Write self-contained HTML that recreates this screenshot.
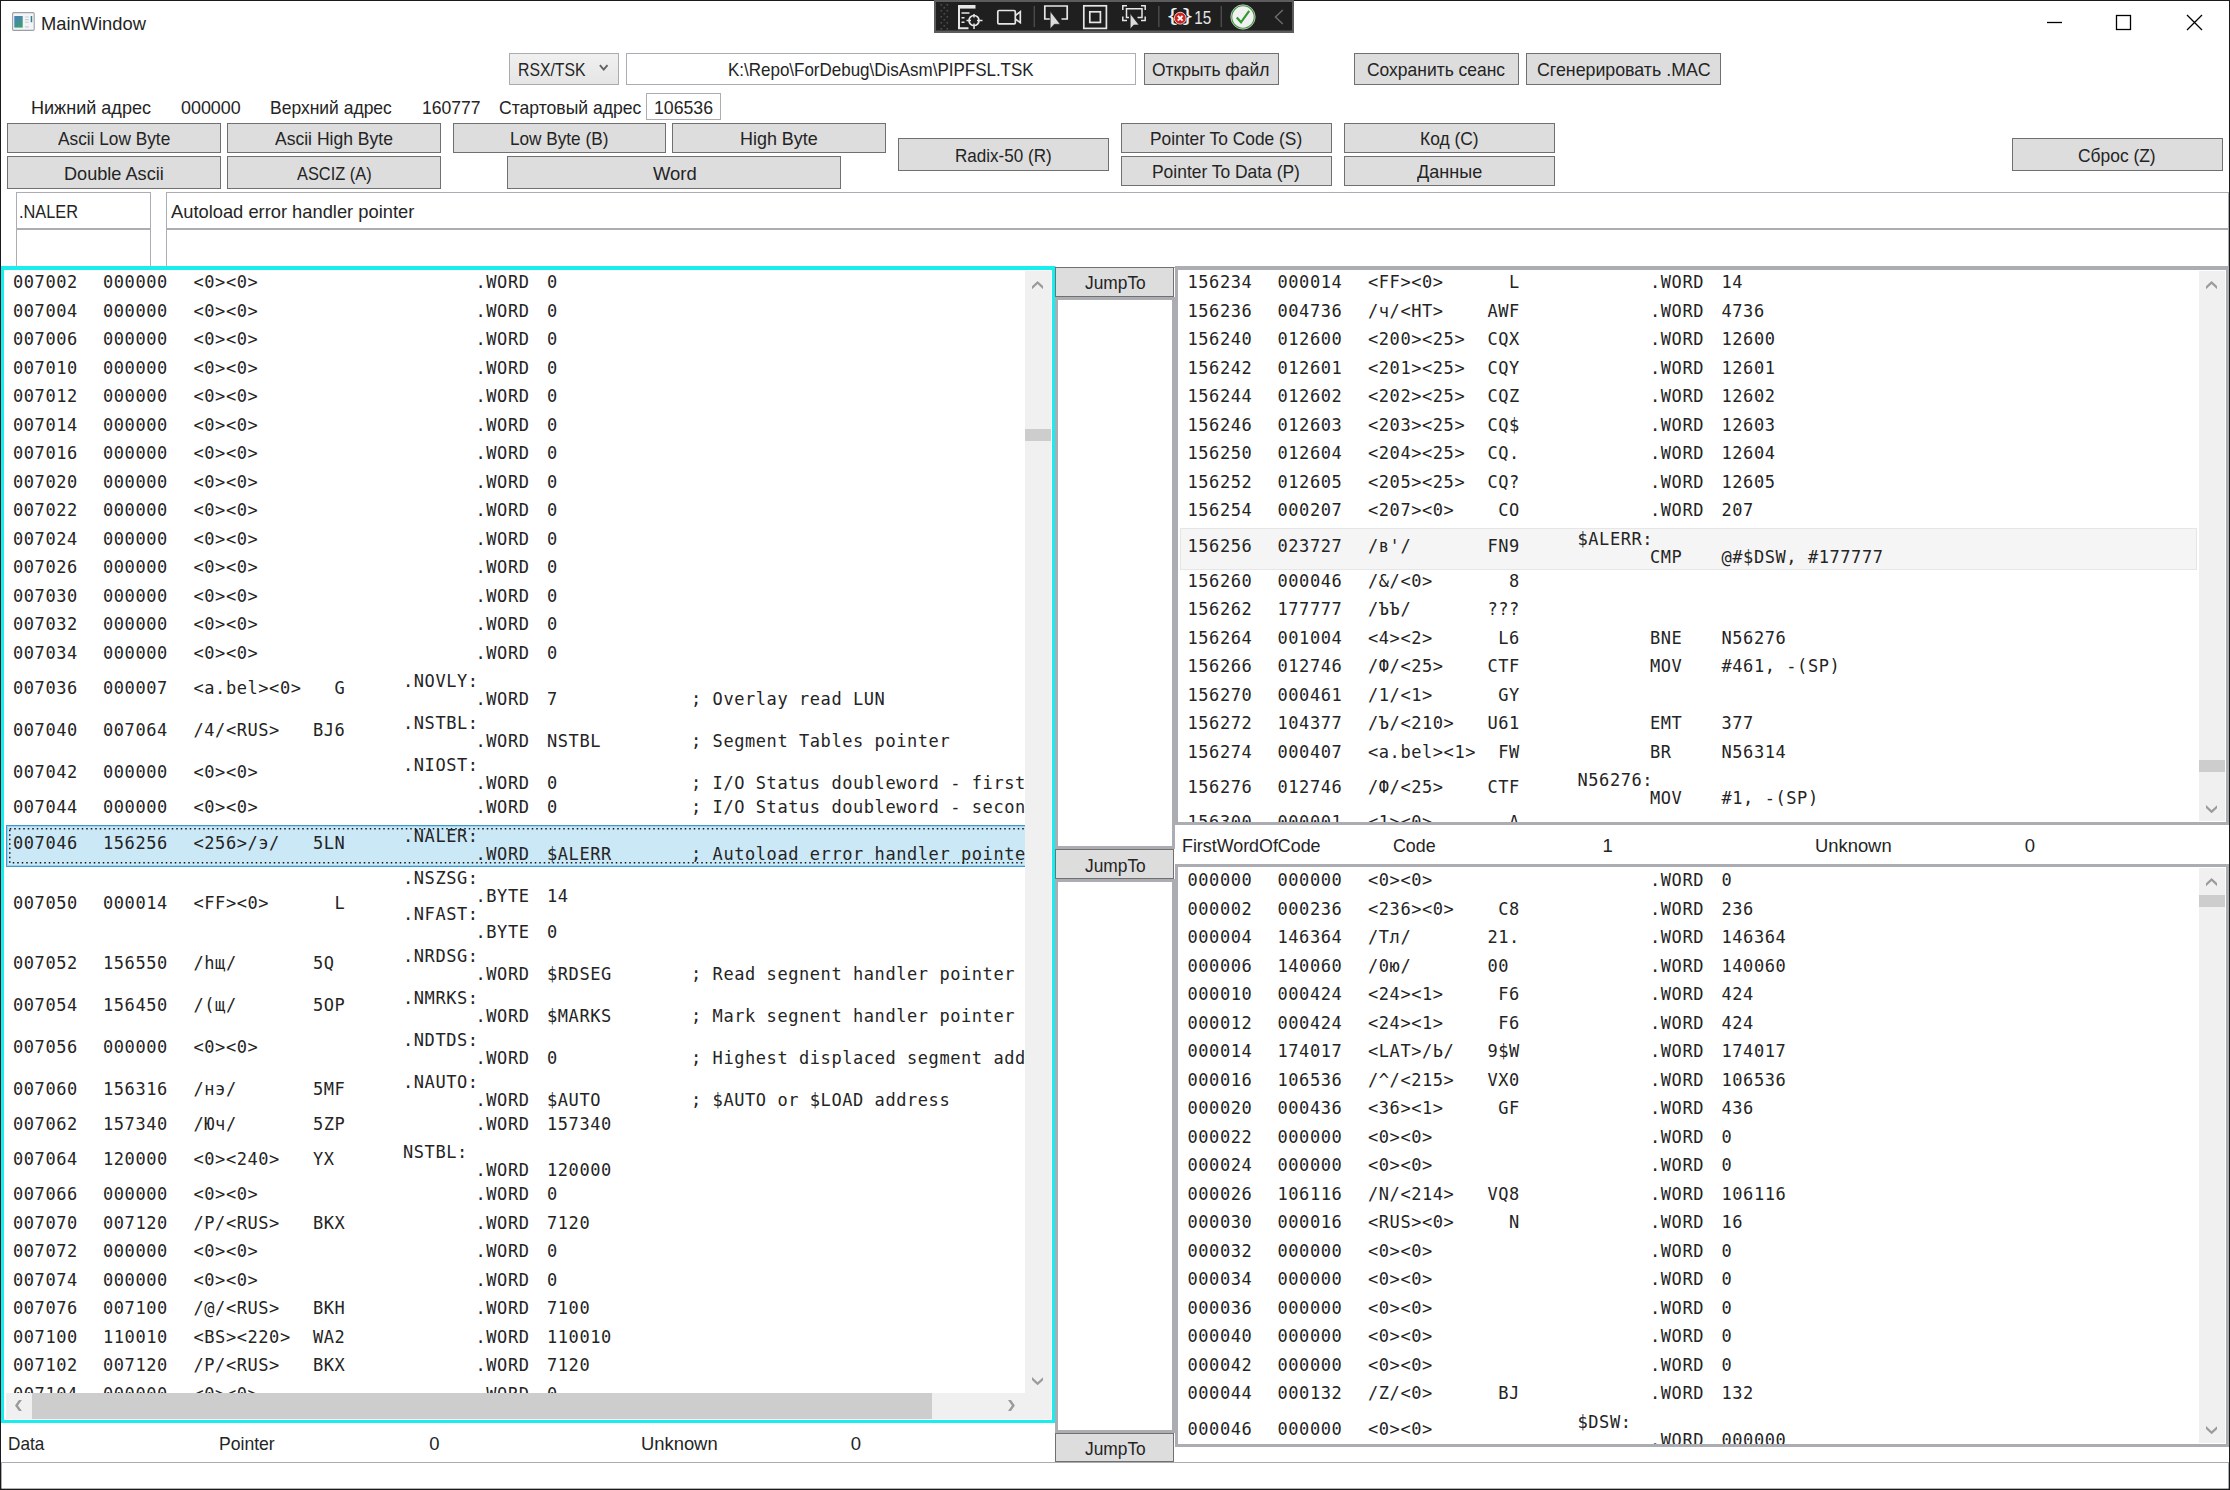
<!DOCTYPE html>
<html lang="ru"><head><meta charset="utf-8"><title>MainWindow</title><style>
html,body{margin:0;padding:0}
body{width:2230px;height:1490px;overflow:hidden;background:#fff;position:relative;font-family:'Liberation Sans',sans-serif;font-size:18.5px;color:#242424}
.a{position:absolute;box-sizing:content-box}
.t{position:absolute;white-space:pre;line-height:24px;transform-origin:0 0}
.l{position:absolute;overflow:hidden;background:#fff;font-family:'DejaVu Sans Mono','Liberation Mono',monospace;font-size:17.0px;line-height:18px;letter-spacing:0.565px}
.l div{position:absolute;left:0;white-space:pre}
.l span{position:absolute;white-space:pre}
</style></head><body>
<svg class="a" style="left:12px;top:12px" width="23" height="19" viewBox="0 0 23 19"><linearGradient id="ig" x1="0" y1="0" x2="0.6" y2="1"><stop offset="0" stop-color="#4b7fbe"/><stop offset="1" stop-color="#3e9c78"/></linearGradient><rect x="0.6" y="0.6" width="21.6" height="17.8" rx="1.2" fill="#f3f4f6" stroke="#9aa0a8" stroke-width="1.1"/><rect x="2.3" y="4" width="8.4" height="11.6" fill="url(#ig)"/><path d="M13 5H16.8M13 7.6H16.8M13 10.3H16.8M13 14.9H16.8" stroke="#c9cdd3" stroke-width="1.1"/><rect x="18.7" y="4" width="1.5" height="6.2" fill="#2f7f8f"/></svg>
<svg class="a" style="left:2040px;top:8px" width="170" height="30" viewBox="0 0 170 30" fill="none" stroke="#000" stroke-width="1.3"><path d="M7 14.5H22"/><rect x="76.5" y="7.5" width="14" height="14"/><path d="M147 7L162 22M162 7L147 22"/></svg>
<svg class="a" style="left:934px;top:0;z-index:5" width="360" height="33" viewBox="0 0 360 33"><rect x="0" y="0" width="360" height="33" fill="#5c5c5c"/><rect x="2" y="2" width="356" height="28.5" fill="#1f1f1f"/><g fill="#4d4d4d"><rect x="6.5" y="4" width="1.6" height="1.6"/><rect x="12.5" y="4" width="1.6" height="1.6"/><rect x="9.5" y="7" width="1.6" height="1.6"/><rect x="6.5" y="10" width="1.6" height="1.6"/><rect x="12.5" y="10" width="1.6" height="1.6"/><rect x="9.5" y="13" width="1.6" height="1.6"/><rect x="6.5" y="16" width="1.6" height="1.6"/><rect x="12.5" y="16" width="1.6" height="1.6"/><rect x="9.5" y="19" width="1.6" height="1.6"/><rect x="6.5" y="22" width="1.6" height="1.6"/><rect x="12.5" y="22" width="1.6" height="1.6"/><rect x="9.5" y="25" width="1.6" height="1.6"/><rect x="6.5" y="28" width="1.6" height="1.6"/><rect x="12.5" y="28" width="1.6" height="1.6"/></g><g fill="none" stroke="#e6e6e6" stroke-width="1.7"><path d="M25 5V28.2H34.5M25 7H41" stroke-width="2"/><path d="M24 6.8H41.5" stroke-width="3.6"/><path d="M27.5 13H35.5M27.5 17.7H30.5M27.5 22.3H30.5" stroke-width="1.5"/><circle cx="40" cy="20.5" r="5"/><path d="M40 14V17.5M40 23.5V29M32.5 20.5H37M43 20.5H48.5" stroke-width="1.5"/><rect x="63.8" y="10.5" width="17.5" height="13.4" rx="1.2"/><path d="M81.3 15.5L86.3 11.8V22.6L81.3 19"/><path d="M116 19H110.8V6H133.2V19H127.5"/><rect x="149.8" y="5.8" width="22.6" height="22.6"/><rect x="155.8" y="11.8" width="10.6" height="10.6"/><path d="M188.8 10V5.8H193M207 5.8H211.2V10M211.2 16.5V20.5H207M193 20.5H188.8V16.5" stroke-width="1.5"/><path d="M195 17.5H192.5V8.8H208V17.5H203.5" stroke-width="1.5"/></g><path d="M116.2 11.3V28.8L120.3 24.3L126.2 24.2Z" fill="#dcdcdc" stroke="#1f1f1f" stroke-width=".6"/><path d="M196.2 13.6V28.9L199.8 25L205 24.9Z" fill="#dcdcdc" stroke="#1f1f1f" stroke-width=".6"/><g stroke="#4a4a4a" stroke-width="1.5"><path d="M100.3 6V27M224.8 6V27M287.3 6V27"/></g><text x="234" y="21.3" font-family="'Liberation Sans',sans-serif" font-size="19" fill="#f0f0f0" textLength="9" lengthAdjust="spacingAndGlyphs">{</text><text x="249" y="21.3" font-family="'Liberation Sans',sans-serif" font-size="19" fill="#f0f0f0" textLength="9" lengthAdjust="spacingAndGlyphs">}</text><circle cx="246.2" cy="18.2" r="5.9" fill="#d6201f" stroke="#f4f4f4" stroke-width=".8"/><path d="M243.8 15.8L248.6 20.6M248.6 15.8L243.8 20.6" stroke="#fff" stroke-width="1.9"/><text x="260.3" y="23.6" font-family="'Liberation Sans',sans-serif" font-size="18.5" fill="#e4e4e4" textLength="17" lengthAdjust="spacingAndGlyphs">15</text><circle cx="309" cy="17" r="11.3" fill="#f1f1f1" stroke="#3c9b3c" stroke-width="1.2"/><circle cx="309" cy="17" r="12.2" fill="none" stroke="#e9f3e9" stroke-width=".7"/><path d="M302.8 17.5L307 22.3L315.2 10.8" fill="none" stroke="#2f9a2f" stroke-width="2.2"/><path d="M348.8 10L341.5 17L348.8 24" fill="none" stroke="#6b6b6b" stroke-width="1.5"/></svg>
<div class="a" style="left:509px;top:53px;width:108px;height:30px;background:linear-gradient(#f0f0f0,#e5e5e5);border:1px solid #acacac;"></div>
<svg class="a" style="left:599.3px;top:64px" width="10" height="8" viewBox="0 0 10 8" fill="none" stroke="#606060" stroke-width="1.9"><path d="M0.9 1.2L4.7 5.6L8.5 1.2"/></svg>
<div class="a" style="left:626px;top:53px;width:508px;height:30px;background:#fff;border:1px solid #abadb3;"></div>
<div class="a" style="left:1144px;top:53px;width:133px;height:30px;background:#ddd;border:1px solid #707070;"></div>
<div class="a" style="left:1354px;top:53px;width:163px;height:30px;background:#ddd;border:1px solid #707070;"></div>
<div class="a" style="left:1526px;top:53px;width:193px;height:30px;background:#ddd;border:1px solid #707070;"></div>
<div class="a" style="left:646px;top:93px;width:73px;height:25px;background:#fff;border:1px solid #abadb3;"></div>
<div class="a" style="left:7px;top:123px;width:212px;height:28px;background:#ddd;border:1px solid #707070;"></div>
<div class="a" style="left:227px;top:123px;width:212px;height:28px;background:#ddd;border:1px solid #707070;"></div>
<div class="a" style="left:7px;top:156px;width:212px;height:31px;background:#ddd;border:1px solid #707070;"></div>
<div class="a" style="left:227px;top:156px;width:212px;height:31px;background:#ddd;border:1px solid #707070;"></div>
<div class="a" style="left:453px;top:123px;width:211px;height:28px;background:#ddd;border:1px solid #707070;"></div>
<div class="a" style="left:672px;top:123px;width:212px;height:28px;background:#ddd;border:1px solid #707070;"></div>
<div class="a" style="left:507px;top:156px;width:332px;height:31px;background:#ddd;border:1px solid #707070;"></div>
<div class="a" style="left:898px;top:138px;width:209px;height:31px;background:#ddd;border:1px solid #707070;"></div>
<div class="a" style="left:1121px;top:123px;width:209px;height:28px;background:#ddd;border:1px solid #707070;"></div>
<div class="a" style="left:1121px;top:156px;width:209px;height:28px;background:#ddd;border:1px solid #707070;"></div>
<div class="a" style="left:1344px;top:123px;width:209px;height:28px;background:#ddd;border:1px solid #707070;"></div>
<div class="a" style="left:1344px;top:156px;width:209px;height:28px;background:#ddd;border:1px solid #707070;"></div>
<div class="a" style="left:2012px;top:138px;width:209px;height:31px;background:#ddd;border:1px solid #707070;"></div>
<div class="a" style="left:16px;top:192px;width:133px;height:35px;background:#fff;border:1px solid #abadb3;"></div>
<div class="a" style="left:16px;top:229px;width:133px;height:37px;background:#fff;border:1px solid #abadb3;"></div>
<div class="a" style="left:166px;top:192px;width:2061px;height:35px;background:#fff;border:1px solid #abadb3;"></div>
<div class="a" style="left:166px;top:229px;width:2061px;height:37px;background:#fff;border:1px solid #abadb3;"></div>
<div class="a" style="left:0;top:266px;width:1048px;height:1150px;background:#fff;border:solid #19eded;border-width:4px 3px 3px 4px;box-shadow:1px 0 0 0 rgba(30,236,236,.5)"></div>
<div class="l" style="left:4px;top:270px;width:1021px;height:1123px">
<span style="left:9.0px;top:3.00px">007002</span>
<span style="left:99.0px;top:3.00px">000000</span>
<span style="left:189.5px;top:3.00px">&lt;0&gt;&lt;0&gt;</span>
<span style="left:471.5px;top:3.00px">.WORD</span>
<span style="left:543.0px;top:3.00px">0</span>
<span style="left:9.0px;top:31.50px">007004</span>
<span style="left:99.0px;top:31.50px">000000</span>
<span style="left:189.5px;top:31.50px">&lt;0&gt;&lt;0&gt;</span>
<span style="left:471.5px;top:31.50px">.WORD</span>
<span style="left:543.0px;top:31.50px">0</span>
<span style="left:9.0px;top:60.00px">007006</span>
<span style="left:99.0px;top:60.00px">000000</span>
<span style="left:189.5px;top:60.00px">&lt;0&gt;&lt;0&gt;</span>
<span style="left:471.5px;top:60.00px">.WORD</span>
<span style="left:543.0px;top:60.00px">0</span>
<span style="left:9.0px;top:88.50px">007010</span>
<span style="left:99.0px;top:88.50px">000000</span>
<span style="left:189.5px;top:88.50px">&lt;0&gt;&lt;0&gt;</span>
<span style="left:471.5px;top:88.50px">.WORD</span>
<span style="left:543.0px;top:88.50px">0</span>
<span style="left:9.0px;top:117.00px">007012</span>
<span style="left:99.0px;top:117.00px">000000</span>
<span style="left:189.5px;top:117.00px">&lt;0&gt;&lt;0&gt;</span>
<span style="left:471.5px;top:117.00px">.WORD</span>
<span style="left:543.0px;top:117.00px">0</span>
<span style="left:9.0px;top:145.50px">007014</span>
<span style="left:99.0px;top:145.50px">000000</span>
<span style="left:189.5px;top:145.50px">&lt;0&gt;&lt;0&gt;</span>
<span style="left:471.5px;top:145.50px">.WORD</span>
<span style="left:543.0px;top:145.50px">0</span>
<span style="left:9.0px;top:174.00px">007016</span>
<span style="left:99.0px;top:174.00px">000000</span>
<span style="left:189.5px;top:174.00px">&lt;0&gt;&lt;0&gt;</span>
<span style="left:471.5px;top:174.00px">.WORD</span>
<span style="left:543.0px;top:174.00px">0</span>
<span style="left:9.0px;top:202.50px">007020</span>
<span style="left:99.0px;top:202.50px">000000</span>
<span style="left:189.5px;top:202.50px">&lt;0&gt;&lt;0&gt;</span>
<span style="left:471.5px;top:202.50px">.WORD</span>
<span style="left:543.0px;top:202.50px">0</span>
<span style="left:9.0px;top:231.00px">007022</span>
<span style="left:99.0px;top:231.00px">000000</span>
<span style="left:189.5px;top:231.00px">&lt;0&gt;&lt;0&gt;</span>
<span style="left:471.5px;top:231.00px">.WORD</span>
<span style="left:543.0px;top:231.00px">0</span>
<span style="left:9.0px;top:259.50px">007024</span>
<span style="left:99.0px;top:259.50px">000000</span>
<span style="left:189.5px;top:259.50px">&lt;0&gt;&lt;0&gt;</span>
<span style="left:471.5px;top:259.50px">.WORD</span>
<span style="left:543.0px;top:259.50px">0</span>
<span style="left:9.0px;top:288.00px">007026</span>
<span style="left:99.0px;top:288.00px">000000</span>
<span style="left:189.5px;top:288.00px">&lt;0&gt;&lt;0&gt;</span>
<span style="left:471.5px;top:288.00px">.WORD</span>
<span style="left:543.0px;top:288.00px">0</span>
<span style="left:9.0px;top:316.50px">007030</span>
<span style="left:99.0px;top:316.50px">000000</span>
<span style="left:189.5px;top:316.50px">&lt;0&gt;&lt;0&gt;</span>
<span style="left:471.5px;top:316.50px">.WORD</span>
<span style="left:543.0px;top:316.50px">0</span>
<span style="left:9.0px;top:345.00px">007032</span>
<span style="left:99.0px;top:345.00px">000000</span>
<span style="left:189.5px;top:345.00px">&lt;0&gt;&lt;0&gt;</span>
<span style="left:471.5px;top:345.00px">.WORD</span>
<span style="left:543.0px;top:345.00px">0</span>
<span style="left:9.0px;top:373.50px">007034</span>
<span style="left:99.0px;top:373.50px">000000</span>
<span style="left:189.5px;top:373.50px">&lt;0&gt;&lt;0&gt;</span>
<span style="left:471.5px;top:373.50px">.WORD</span>
<span style="left:543.0px;top:373.50px">0</span>
<span style="left:9.0px;top:409.20px">007036</span>
<span style="left:99.0px;top:409.20px">000007</span>
<span style="left:189.5px;top:409.20px">&lt;a.bel&gt;&lt;0&gt;</span>
<span style="left:309.0px;top:409.20px">  G</span>
<span style="left:399.0px;top:402.10px">.NOVLY:</span>
<span style="left:471.5px;top:420.10px">.WORD</span>
<span style="left:543.0px;top:420.10px">7</span>
<span style="left:687.0px;top:420.10px">; Overlay read LUN</span>
<span style="left:9.0px;top:451.20px">007040</span>
<span style="left:99.0px;top:451.20px">007064</span>
<span style="left:189.5px;top:451.20px">/4/&lt;RUS&gt;</span>
<span style="left:309.0px;top:451.20px">BJ6</span>
<span style="left:399.0px;top:444.10px">.NSTBL:</span>
<span style="left:471.5px;top:462.10px">.WORD</span>
<span style="left:543.0px;top:462.10px">NSTBL</span>
<span style="left:687.0px;top:462.10px">; Segment Tables pointer</span>
<span style="left:9.0px;top:493.20px">007042</span>
<span style="left:99.0px;top:493.20px">000000</span>
<span style="left:189.5px;top:493.20px">&lt;0&gt;&lt;0&gt;</span>
<span style="left:399.0px;top:486.10px">.NIOST:</span>
<span style="left:471.5px;top:504.10px">.WORD</span>
<span style="left:543.0px;top:504.10px">0</span>
<span style="left:687.0px;top:504.10px">; I/O Status doubleword - first word</span>
<span style="left:9.0px;top:528.00px">007044</span>
<span style="left:99.0px;top:528.00px">000000</span>
<span style="left:189.5px;top:528.00px">&lt;0&gt;&lt;0&gt;</span>
<span style="left:471.5px;top:528.00px">.WORD</span>
<span style="left:543.0px;top:528.00px">0</span>
<span style="left:687.0px;top:528.00px">; I/O Status doubleword - second word</span>
<div style="left:2px;top:555.0px;width:1061px;height:40px;background:#cbe8f6;border:1px solid #3a9cd3;box-shadow:inset 0 0 0 1px rgba(58,156,211,.3)"></div>
<svg style="position:absolute;left:5px;top:558.4px" width="1061" height="35.5"><rect x="0.75" y="0.75" width="1081" height="34" fill="none" stroke="#111" stroke-width="1.5" stroke-dasharray="1.5 3"/></svg>
<span style="left:9.0px;top:563.70px">007046</span>
<span style="left:99.0px;top:563.70px">156256</span>
<span style="left:189.5px;top:563.70px">&lt;256&gt;/э/</span>
<span style="left:309.0px;top:563.70px">5LN</span>
<span style="left:399.0px;top:556.60px">.NALER:</span>
<span style="left:471.5px;top:574.60px">.WORD</span>
<span style="left:543.0px;top:574.60px">$ALERR</span>
<span style="left:687.0px;top:574.60px">; Autoload error handler pointer</span>
<span style="left:9.0px;top:623.70px">007050</span>
<span style="left:99.0px;top:623.70px">000014</span>
<span style="left:189.5px;top:623.70px">&lt;FF&gt;&lt;0&gt;</span>
<span style="left:309.0px;top:623.70px">  L</span>
<span style="left:399.0px;top:598.60px">.NSZSG:</span>
<span style="left:471.5px;top:616.60px">.BYTE</span>
<span style="left:543.0px;top:616.60px">14</span>
<span style="left:399.0px;top:634.60px">.NFAST:</span>
<span style="left:471.5px;top:652.60px">.BYTE</span>
<span style="left:543.0px;top:652.60px">0</span>
<span style="left:9.0px;top:683.70px">007052</span>
<span style="left:99.0px;top:683.70px">156550</span>
<span style="left:189.5px;top:683.70px">/hщ/</span>
<span style="left:309.0px;top:683.70px">5Q </span>
<span style="left:399.0px;top:676.60px">.NRDSG:</span>
<span style="left:471.5px;top:694.60px">.WORD</span>
<span style="left:543.0px;top:694.60px">$RDSEG</span>
<span style="left:687.0px;top:694.60px">; Read segnent handler pointer</span>
<span style="left:9.0px;top:725.70px">007054</span>
<span style="left:99.0px;top:725.70px">156450</span>
<span style="left:189.5px;top:725.70px">/(щ/</span>
<span style="left:309.0px;top:725.70px">5OP</span>
<span style="left:399.0px;top:718.60px">.NMRKS:</span>
<span style="left:471.5px;top:736.60px">.WORD</span>
<span style="left:543.0px;top:736.60px">$MARKS</span>
<span style="left:687.0px;top:736.60px">; Mark segnent handler pointer</span>
<span style="left:9.0px;top:767.70px">007056</span>
<span style="left:99.0px;top:767.70px">000000</span>
<span style="left:189.5px;top:767.70px">&lt;0&gt;&lt;0&gt;</span>
<span style="left:399.0px;top:760.60px">.NDTDS:</span>
<span style="left:471.5px;top:778.60px">.WORD</span>
<span style="left:543.0px;top:778.60px">0</span>
<span style="left:687.0px;top:778.60px">; Highest displaced segment address</span>
<span style="left:9.0px;top:809.70px">007060</span>
<span style="left:99.0px;top:809.70px">156316</span>
<span style="left:189.5px;top:809.70px">/нэ/</span>
<span style="left:309.0px;top:809.70px">5MF</span>
<span style="left:399.0px;top:802.60px">.NAUTO:</span>
<span style="left:471.5px;top:820.60px">.WORD</span>
<span style="left:543.0px;top:820.60px">$AUTO</span>
<span style="left:687.0px;top:820.60px">; $AUTO or $LOAD address</span>
<span style="left:9.0px;top:844.50px">007062</span>
<span style="left:99.0px;top:844.50px">157340</span>
<span style="left:189.5px;top:844.50px">/Юч/</span>
<span style="left:309.0px;top:844.50px">5ZP</span>
<span style="left:471.5px;top:844.50px">.WORD</span>
<span style="left:543.0px;top:844.50px">157340</span>
<span style="left:9.0px;top:880.20px">007064</span>
<span style="left:99.0px;top:880.20px">120000</span>
<span style="left:189.5px;top:880.20px">&lt;0&gt;&lt;240&gt;</span>
<span style="left:309.0px;top:880.20px">YX </span>
<span style="left:399.0px;top:873.10px">NSTBL:</span>
<span style="left:471.5px;top:891.10px">.WORD</span>
<span style="left:543.0px;top:891.10px">120000</span>
<span style="left:9.0px;top:915.00px">007066</span>
<span style="left:99.0px;top:915.00px">000000</span>
<span style="left:189.5px;top:915.00px">&lt;0&gt;&lt;0&gt;</span>
<span style="left:471.5px;top:915.00px">.WORD</span>
<span style="left:543.0px;top:915.00px">0</span>
<span style="left:9.0px;top:943.50px">007070</span>
<span style="left:99.0px;top:943.50px">007120</span>
<span style="left:189.5px;top:943.50px">/P/&lt;RUS&gt;</span>
<span style="left:309.0px;top:943.50px">BKX</span>
<span style="left:471.5px;top:943.50px">.WORD</span>
<span style="left:543.0px;top:943.50px">7120</span>
<span style="left:9.0px;top:972.00px">007072</span>
<span style="left:99.0px;top:972.00px">000000</span>
<span style="left:189.5px;top:972.00px">&lt;0&gt;&lt;0&gt;</span>
<span style="left:471.5px;top:972.00px">.WORD</span>
<span style="left:543.0px;top:972.00px">0</span>
<span style="left:9.0px;top:1000.50px">007074</span>
<span style="left:99.0px;top:1000.50px">000000</span>
<span style="left:189.5px;top:1000.50px">&lt;0&gt;&lt;0&gt;</span>
<span style="left:471.5px;top:1000.50px">.WORD</span>
<span style="left:543.0px;top:1000.50px">0</span>
<span style="left:9.0px;top:1029.00px">007076</span>
<span style="left:99.0px;top:1029.00px">007100</span>
<span style="left:189.5px;top:1029.00px">/@/&lt;RUS&gt;</span>
<span style="left:309.0px;top:1029.00px">BKH</span>
<span style="left:471.5px;top:1029.00px">.WORD</span>
<span style="left:543.0px;top:1029.00px">7100</span>
<span style="left:9.0px;top:1057.50px">007100</span>
<span style="left:99.0px;top:1057.50px">110010</span>
<span style="left:189.5px;top:1057.50px">&lt;BS&gt;&lt;220&gt;</span>
<span style="left:309.0px;top:1057.50px">WA2</span>
<span style="left:471.5px;top:1057.50px">.WORD</span>
<span style="left:543.0px;top:1057.50px">110010</span>
<span style="left:9.0px;top:1086.00px">007102</span>
<span style="left:99.0px;top:1086.00px">007120</span>
<span style="left:189.5px;top:1086.00px">/P/&lt;RUS&gt;</span>
<span style="left:309.0px;top:1086.00px">BKX</span>
<span style="left:471.5px;top:1086.00px">.WORD</span>
<span style="left:543.0px;top:1086.00px">7120</span>
<span style="left:9.0px;top:1114.50px">007104</span>
<span style="left:99.0px;top:1114.50px">000000</span>
<span style="left:189.5px;top:1114.50px">&lt;0&gt;&lt;0&gt;</span>
<span style="left:471.5px;top:1114.50px">.WORD</span>
<span style="left:543.0px;top:1114.50px">0</span>
</div>
<div class="a" style="left:1025px;top:271px;width:26px;height:1148px;background:#f0f0f0;"></div>
<div class="a" style="left:1025px;top:429px;width:26px;height:12px;background:#cdcdcd;"></div>
<svg class="a" style="left:1032px;top:280.8px" width="11.2" height="8.3" viewBox="0 0 11.2 8.3"><polygon points="5.6,0.0 11.2,5.3 11.2,8.3 5.6,3.0 0.0,8.3 0.0,5.3" fill="#9b9b9b"/></svg>
<svg class="a" style="left:1031.9px;top:1376.5px" width="11.2" height="8.3" viewBox="0 0 11.2 8.3"><polygon points="5.6,8.3 11.2,3.0 11.2,0.0 5.6,5.3 0.0,0.0 0.0,3.0" fill="#9b9b9b"/></svg>
<div class="a" style="left:6px;top:1393px;width:1045px;height:26px;background:#f0f0f0;"></div>
<div class="a" style="left:32px;top:1393px;width:900px;height:26px;background:#cdcdcd;"></div>
<svg class="a" style="left:15.1px;top:1400px" width="6.9" height="11" viewBox="0 0 6.9 11"><polygon points="0.0,5.5 3.9,0.0 6.9,0.0 3.0,5.5 6.9,11.0 3.9,11.0" fill="#9b9b9b"/></svg>
<svg class="a" style="left:1008.2px;top:1400.1px" width="6.9" height="11" viewBox="0 0 6.9 11"><polygon points="6.9,5.5 3.0,0.0 0.0,0.0 3.9,5.5 0.0,11.0 3.0,11.0" fill="#9b9b9b"/></svg>
<div class="a" style="left:1px;top:1462px;width:2226px;height:26px;background:#fff;border:1px solid #abadb3;"></div>
<div class="a" style="left:1055px;top:297px;width:114px;height:546px;background:#fff;border:3px solid #abadb3;"></div>
<div class="a" style="left:1055px;top:879px;width:114px;height:548px;background:#fff;border:3px solid #abadb3;"></div>
<div class="a" style="left:1055px;top:267px;width:117px;height:28px;background:#ddd;border:1px solid #707070;"></div>
<div class="a" style="left:1055px;top:849px;width:117px;height:28px;background:#ddd;border:1px solid #707070;"></div>
<div class="a" style="left:1055px;top:1433px;width:117px;height:27px;background:#ddd;border:1px solid #707070;"></div>
<div class="a" style="left:1175px;top:266px;width:1048px;height:552px;background:#fff;border:solid #abadb3;border-width:4px 3px 3px 3px"></div>
<div class="l" style="left:1178px;top:270px;width:1021px;height:552px">
<span style="left:9.5px;top:3.00px">156234</span>
<span style="left:99.5px;top:3.00px">000014</span>
<span style="left:190.0px;top:3.00px">&lt;FF&gt;&lt;0&gt;</span>
<span style="left:309.5px;top:3.00px">  L</span>
<span style="left:472.0px;top:3.00px">.WORD</span>
<span style="left:543.5px;top:3.00px">14</span>
<span style="left:9.5px;top:31.50px">156236</span>
<span style="left:99.5px;top:31.50px">004736</span>
<span style="left:190.0px;top:31.50px">/ч/&lt;HT&gt;</span>
<span style="left:309.5px;top:31.50px">AWF</span>
<span style="left:472.0px;top:31.50px">.WORD</span>
<span style="left:543.5px;top:31.50px">4736</span>
<span style="left:9.5px;top:60.00px">156240</span>
<span style="left:99.5px;top:60.00px">012600</span>
<span style="left:190.0px;top:60.00px">&lt;200&gt;&lt;25&gt;</span>
<span style="left:309.5px;top:60.00px">CQX</span>
<span style="left:472.0px;top:60.00px">.WORD</span>
<span style="left:543.5px;top:60.00px">12600</span>
<span style="left:9.5px;top:88.50px">156242</span>
<span style="left:99.5px;top:88.50px">012601</span>
<span style="left:190.0px;top:88.50px">&lt;201&gt;&lt;25&gt;</span>
<span style="left:309.5px;top:88.50px">CQY</span>
<span style="left:472.0px;top:88.50px">.WORD</span>
<span style="left:543.5px;top:88.50px">12601</span>
<span style="left:9.5px;top:117.00px">156244</span>
<span style="left:99.5px;top:117.00px">012602</span>
<span style="left:190.0px;top:117.00px">&lt;202&gt;&lt;25&gt;</span>
<span style="left:309.5px;top:117.00px">CQZ</span>
<span style="left:472.0px;top:117.00px">.WORD</span>
<span style="left:543.5px;top:117.00px">12602</span>
<span style="left:9.5px;top:145.50px">156246</span>
<span style="left:99.5px;top:145.50px">012603</span>
<span style="left:190.0px;top:145.50px">&lt;203&gt;&lt;25&gt;</span>
<span style="left:309.5px;top:145.50px">CQ$</span>
<span style="left:472.0px;top:145.50px">.WORD</span>
<span style="left:543.5px;top:145.50px">12603</span>
<span style="left:9.5px;top:174.00px">156250</span>
<span style="left:99.5px;top:174.00px">012604</span>
<span style="left:190.0px;top:174.00px">&lt;204&gt;&lt;25&gt;</span>
<span style="left:309.5px;top:174.00px">CQ.</span>
<span style="left:472.0px;top:174.00px">.WORD</span>
<span style="left:543.5px;top:174.00px">12604</span>
<span style="left:9.5px;top:202.50px">156252</span>
<span style="left:99.5px;top:202.50px">012605</span>
<span style="left:190.0px;top:202.50px">&lt;205&gt;&lt;25&gt;</span>
<span style="left:309.5px;top:202.50px">CQ?</span>
<span style="left:472.0px;top:202.50px">.WORD</span>
<span style="left:543.5px;top:202.50px">12605</span>
<span style="left:9.5px;top:231.00px">156254</span>
<span style="left:99.5px;top:231.00px">000207</span>
<span style="left:190.0px;top:231.00px">&lt;207&gt;&lt;0&gt;</span>
<span style="left:309.5px;top:231.00px"> CO</span>
<span style="left:472.0px;top:231.00px">.WORD</span>
<span style="left:543.5px;top:231.00px">207</span>
<div style="left:2px;top:258.0px;width:1015px;height:40px;background:#f5f5f5;border:1px solid #e6e6e6"></div>
<span style="left:9.5px;top:266.70px">156256</span>
<span style="left:99.5px;top:266.70px">023727</span>
<span style="left:190.0px;top:266.70px">/в'/</span>
<span style="left:309.5px;top:266.70px">FN9</span>
<span style="left:399.5px;top:259.60px">$ALERR:</span>
<span style="left:472.0px;top:277.60px">CMP</span>
<span style="left:543.5px;top:277.60px">@#$DSW, #177777</span>
<span style="left:9.5px;top:301.50px">156260</span>
<span style="left:99.5px;top:301.50px">000046</span>
<span style="left:190.0px;top:301.50px">/&amp;/&lt;0&gt;</span>
<span style="left:309.5px;top:301.50px">  8</span>
<span style="left:9.5px;top:330.00px">156262</span>
<span style="left:99.5px;top:330.00px">177777</span>
<span style="left:190.0px;top:330.00px">/ЪЪ/</span>
<span style="left:309.5px;top:330.00px">???</span>
<span style="left:9.5px;top:358.50px">156264</span>
<span style="left:99.5px;top:358.50px">001004</span>
<span style="left:190.0px;top:358.50px">&lt;4&gt;&lt;2&gt;</span>
<span style="left:309.5px;top:358.50px"> L6</span>
<span style="left:472.0px;top:358.50px">BNE</span>
<span style="left:543.5px;top:358.50px">N56276</span>
<span style="left:9.5px;top:387.00px">156266</span>
<span style="left:99.5px;top:387.00px">012746</span>
<span style="left:190.0px;top:387.00px">/Ф/&lt;25&gt;</span>
<span style="left:309.5px;top:387.00px">CTF</span>
<span style="left:472.0px;top:387.00px">MOV</span>
<span style="left:543.5px;top:387.00px">#461, -(SP)</span>
<span style="left:9.5px;top:415.50px">156270</span>
<span style="left:99.5px;top:415.50px">000461</span>
<span style="left:190.0px;top:415.50px">/1/&lt;1&gt;</span>
<span style="left:309.5px;top:415.50px"> GY</span>
<span style="left:9.5px;top:444.00px">156272</span>
<span style="left:99.5px;top:444.00px">104377</span>
<span style="left:190.0px;top:444.00px">/Ъ/&lt;210&gt;</span>
<span style="left:309.5px;top:444.00px">U61</span>
<span style="left:472.0px;top:444.00px">EMT</span>
<span style="left:543.5px;top:444.00px">377</span>
<span style="left:9.5px;top:472.50px">156274</span>
<span style="left:99.5px;top:472.50px">000407</span>
<span style="left:190.0px;top:472.50px">&lt;a.bel&gt;&lt;1&gt;</span>
<span style="left:309.5px;top:472.50px"> FW</span>
<span style="left:472.0px;top:472.50px">BR</span>
<span style="left:543.5px;top:472.50px">N56314</span>
<span style="left:9.5px;top:508.20px">156276</span>
<span style="left:99.5px;top:508.20px">012746</span>
<span style="left:190.0px;top:508.20px">/Ф/&lt;25&gt;</span>
<span style="left:309.5px;top:508.20px">CTF</span>
<span style="left:399.5px;top:501.10px">N56276:</span>
<span style="left:472.0px;top:519.10px">MOV</span>
<span style="left:543.5px;top:519.10px">#1, -(SP)</span>
<span style="left:9.5px;top:543.00px">156300</span>
<span style="left:99.5px;top:543.00px">000001</span>
<span style="left:190.0px;top:543.00px">&lt;1&gt;&lt;0&gt;</span>
<span style="left:309.5px;top:543.00px">  A</span>
</div>
<div class="a" style="left:2199px;top:271px;width:26px;height:550px;background:#f0f0f0;"></div>
<div class="a" style="left:2199px;top:760px;width:26px;height:12px;background:#cdcdcd;"></div>
<svg class="a" style="left:2205.9px;top:280.8px" width="11.2" height="8.3" viewBox="0 0 11.2 8.3"><polygon points="5.6,0.0 11.2,5.3 11.2,8.3 5.6,3.0 0.0,8.3 0.0,5.3" fill="#9b9b9b"/></svg>
<svg class="a" style="left:2205.9px;top:804.5px" width="11.2" height="8.3" viewBox="0 0 11.2 8.3"><polygon points="5.6,8.3 11.2,3.0 11.2,0.0 5.6,5.3 0.0,0.0 0.0,3.0" fill="#9b9b9b"/></svg>
<div class="a" style="left:1175px;top:864px;width:1048px;height:577px;background:#fff;border:3px solid #abadb3;"></div>
<div class="l" style="left:1178px;top:867px;width:1021px;height:577px">
<span style="left:9.5px;top:4.00px">000000</span>
<span style="left:99.5px;top:4.00px">000000</span>
<span style="left:190.0px;top:4.00px">&lt;0&gt;&lt;0&gt;</span>
<span style="left:472.0px;top:4.00px">.WORD</span>
<span style="left:543.5px;top:4.00px">0</span>
<span style="left:9.5px;top:32.50px">000002</span>
<span style="left:99.5px;top:32.50px">000236</span>
<span style="left:190.0px;top:32.50px">&lt;236&gt;&lt;0&gt;</span>
<span style="left:309.5px;top:32.50px"> C8</span>
<span style="left:472.0px;top:32.50px">.WORD</span>
<span style="left:543.5px;top:32.50px">236</span>
<span style="left:9.5px;top:61.00px">000004</span>
<span style="left:99.5px;top:61.00px">146364</span>
<span style="left:190.0px;top:61.00px">/Тл/</span>
<span style="left:309.5px;top:61.00px">21.</span>
<span style="left:472.0px;top:61.00px">.WORD</span>
<span style="left:543.5px;top:61.00px">146364</span>
<span style="left:9.5px;top:89.50px">000006</span>
<span style="left:99.5px;top:89.50px">140060</span>
<span style="left:190.0px;top:89.50px">/0ю/</span>
<span style="left:309.5px;top:89.50px">00 </span>
<span style="left:472.0px;top:89.50px">.WORD</span>
<span style="left:543.5px;top:89.50px">140060</span>
<span style="left:9.5px;top:118.00px">000010</span>
<span style="left:99.5px;top:118.00px">000424</span>
<span style="left:190.0px;top:118.00px">&lt;24&gt;&lt;1&gt;</span>
<span style="left:309.5px;top:118.00px"> F6</span>
<span style="left:472.0px;top:118.00px">.WORD</span>
<span style="left:543.5px;top:118.00px">424</span>
<span style="left:9.5px;top:146.50px">000012</span>
<span style="left:99.5px;top:146.50px">000424</span>
<span style="left:190.0px;top:146.50px">&lt;24&gt;&lt;1&gt;</span>
<span style="left:309.5px;top:146.50px"> F6</span>
<span style="left:472.0px;top:146.50px">.WORD</span>
<span style="left:543.5px;top:146.50px">424</span>
<span style="left:9.5px;top:175.00px">000014</span>
<span style="left:99.5px;top:175.00px">174017</span>
<span style="left:190.0px;top:175.00px">&lt;LAT&gt;/Ь/</span>
<span style="left:309.5px;top:175.00px">9$W</span>
<span style="left:472.0px;top:175.00px">.WORD</span>
<span style="left:543.5px;top:175.00px">174017</span>
<span style="left:9.5px;top:203.50px">000016</span>
<span style="left:99.5px;top:203.50px">106536</span>
<span style="left:190.0px;top:203.50px">/^/&lt;215&gt;</span>
<span style="left:309.5px;top:203.50px">VX0</span>
<span style="left:472.0px;top:203.50px">.WORD</span>
<span style="left:543.5px;top:203.50px">106536</span>
<span style="left:9.5px;top:232.00px">000020</span>
<span style="left:99.5px;top:232.00px">000436</span>
<span style="left:190.0px;top:232.00px">&lt;36&gt;&lt;1&gt;</span>
<span style="left:309.5px;top:232.00px"> GF</span>
<span style="left:472.0px;top:232.00px">.WORD</span>
<span style="left:543.5px;top:232.00px">436</span>
<span style="left:9.5px;top:260.50px">000022</span>
<span style="left:99.5px;top:260.50px">000000</span>
<span style="left:190.0px;top:260.50px">&lt;0&gt;&lt;0&gt;</span>
<span style="left:472.0px;top:260.50px">.WORD</span>
<span style="left:543.5px;top:260.50px">0</span>
<span style="left:9.5px;top:289.00px">000024</span>
<span style="left:99.5px;top:289.00px">000000</span>
<span style="left:190.0px;top:289.00px">&lt;0&gt;&lt;0&gt;</span>
<span style="left:472.0px;top:289.00px">.WORD</span>
<span style="left:543.5px;top:289.00px">0</span>
<span style="left:9.5px;top:317.50px">000026</span>
<span style="left:99.5px;top:317.50px">106116</span>
<span style="left:190.0px;top:317.50px">/N/&lt;214&gt;</span>
<span style="left:309.5px;top:317.50px">VQ8</span>
<span style="left:472.0px;top:317.50px">.WORD</span>
<span style="left:543.5px;top:317.50px">106116</span>
<span style="left:9.5px;top:346.00px">000030</span>
<span style="left:99.5px;top:346.00px">000016</span>
<span style="left:190.0px;top:346.00px">&lt;RUS&gt;&lt;0&gt;</span>
<span style="left:309.5px;top:346.00px">  N</span>
<span style="left:472.0px;top:346.00px">.WORD</span>
<span style="left:543.5px;top:346.00px">16</span>
<span style="left:9.5px;top:374.50px">000032</span>
<span style="left:99.5px;top:374.50px">000000</span>
<span style="left:190.0px;top:374.50px">&lt;0&gt;&lt;0&gt;</span>
<span style="left:472.0px;top:374.50px">.WORD</span>
<span style="left:543.5px;top:374.50px">0</span>
<span style="left:9.5px;top:403.00px">000034</span>
<span style="left:99.5px;top:403.00px">000000</span>
<span style="left:190.0px;top:403.00px">&lt;0&gt;&lt;0&gt;</span>
<span style="left:472.0px;top:403.00px">.WORD</span>
<span style="left:543.5px;top:403.00px">0</span>
<span style="left:9.5px;top:431.50px">000036</span>
<span style="left:99.5px;top:431.50px">000000</span>
<span style="left:190.0px;top:431.50px">&lt;0&gt;&lt;0&gt;</span>
<span style="left:472.0px;top:431.50px">.WORD</span>
<span style="left:543.5px;top:431.50px">0</span>
<span style="left:9.5px;top:460.00px">000040</span>
<span style="left:99.5px;top:460.00px">000000</span>
<span style="left:190.0px;top:460.00px">&lt;0&gt;&lt;0&gt;</span>
<span style="left:472.0px;top:460.00px">.WORD</span>
<span style="left:543.5px;top:460.00px">0</span>
<span style="left:9.5px;top:488.50px">000042</span>
<span style="left:99.5px;top:488.50px">000000</span>
<span style="left:190.0px;top:488.50px">&lt;0&gt;&lt;0&gt;</span>
<span style="left:472.0px;top:488.50px">.WORD</span>
<span style="left:543.5px;top:488.50px">0</span>
<span style="left:9.5px;top:517.00px">000044</span>
<span style="left:99.5px;top:517.00px">000132</span>
<span style="left:190.0px;top:517.00px">/Z/&lt;0&gt;</span>
<span style="left:309.5px;top:517.00px"> BJ</span>
<span style="left:472.0px;top:517.00px">.WORD</span>
<span style="left:543.5px;top:517.00px">132</span>
<span style="left:9.5px;top:552.70px">000046</span>
<span style="left:99.5px;top:552.70px">000000</span>
<span style="left:190.0px;top:552.70px">&lt;0&gt;&lt;0&gt;</span>
<span style="left:399.5px;top:545.60px">$DSW:</span>
<span style="left:472.0px;top:563.60px">.WORD</span>
<span style="left:543.5px;top:563.60px">000000</span>
</div>
<div class="a" style="left:2199px;top:868px;width:26px;height:575px;background:#f0f0f0;"></div>
<div class="a" style="left:2199px;top:895px;width:26px;height:12px;background:#cdcdcd;"></div>
<svg class="a" style="left:2205.9px;top:878.2px" width="11.2" height="8.3" viewBox="0 0 11.2 8.3"><polygon points="5.6,0.0 11.2,5.3 11.2,8.3 5.6,3.0 0.0,8.3 0.0,5.3" fill="#9b9b9b"/></svg>
<svg class="a" style="left:2205.9px;top:1426.4px" width="11.2" height="8.3" viewBox="0 0 11.2 8.3"><polygon points="5.6,8.3 11.2,3.0 11.2,0.0 5.6,5.3 0.0,0.0 0.0,3.0" fill="#9b9b9b"/></svg>
<div class="a" style="left:0;top:0;width:2228px;height:1488px;border:solid #1a1a1a;border-width:1px 1px 1px 1px;box-shadow:inset 0 -1px 0 0 rgba(0,0,0,.3);z-index:4"></div>
<span class="t" style="left:41.01px;top:12.00px;transform:scaleX(0.9905);">MainWindow</span>
<span class="t" style="left:517.55px;top:58.00px;transform:scaleX(0.8538);">RSX/TSK</span>
<span class="t" style="left:728.08px;top:58.00px;transform:scaleX(0.9175);">K:\Repo\ForDebug\DisAsm\PIPFSL.TSK</span>
<span class="t" style="left:1152.06px;top:58.00px;transform:scaleX(0.9431);">Открыть файл</span>
<span class="t" style="left:1366.66px;top:58.00px;transform:scaleX(0.9434);">Сохранить сеанс</span>
<span class="t" style="left:1536.64px;top:58.00px;transform:scaleX(0.9609);">Сгенерировать .MAC</span>
<span class="t" style="left:31.02px;top:96.00px;transform:scaleX(0.9754);">Нижний адрес</span>
<span class="t" style="left:181.03px;top:96.00px;transform:scaleX(0.9667);">000000</span>
<span class="t" style="left:270.05px;top:96.00px;transform:scaleX(0.9453);">Верхний адрес</span>
<span class="t" style="left:422.05px;top:96.00px;transform:scaleX(0.9500);">160777</span>
<span class="t" style="left:499.45px;top:96.00px;transform:scaleX(0.9500);">Стартовый адрес</span>
<span class="t" style="left:654.04px;top:96.00px;transform:scaleX(0.9567);">106536</span>
<span class="t" style="left:58.00px;top:127.00px;transform:scaleX(0.9333);">Ascii Low Byte</span>
<span class="t" style="left:275.00px;top:127.00px;transform:scaleX(0.9476);">Ascii High Byte</span>
<span class="t" style="left:64.02px;top:161.60px;transform:scaleX(0.9800);">Double Ascii</span>
<span class="t" style="left:297.00px;top:161.60px;transform:scaleX(0.8855);">ASCIZ (A)</span>
<span class="t" style="left:510.07px;top:127.00px;transform:scaleX(0.9288);">Low Byte (B)</span>
<span class="t" style="left:740.03px;top:127.00px;transform:scaleX(0.9696);">High Byte</span>
<span class="t" style="left:652.60px;top:161.60px;transform:scaleX(0.9953);">Word</span>
<span class="t" style="left:955.08px;top:144.00px;transform:scaleX(0.9223);">Radix-50 (R)</span>
<span class="t" style="left:1150.46px;top:127.00px;transform:scaleX(0.9387);">Pointer To Code (S)</span>
<span class="t" style="left:1152.46px;top:160.00px;transform:scaleX(0.9419);">Pointer To Data (P)</span>
<span class="t" style="left:1420.06px;top:127.00px;transform:scaleX(0.9400);">Код (C)</span>
<span class="t" style="left:1417.00px;top:160.00px;transform:scaleX(0.9758);">Данные</span>
<span class="t" style="left:2078.46px;top:144.40px;transform:scaleX(0.9407);">Сброс (Z)</span>
<span class="t" style="left:19.23px;top:200.00px;transform:scaleX(0.8828);">.NALER</span>
<span class="t" style="left:171.00px;top:200.00px;transform:scaleX(0.9898);">Autoload error handler pointer</span>
<span class="t" style="left:8.47px;top:1431.50px;transform:scaleX(0.9289);">Data</span>
<span class="t" style="left:219.45px;top:1431.50px;transform:scaleX(0.9500);">Pointer</span>
<span class="t" style="left:429.25px;top:1431.50px;">0</span>
<span class="t" style="left:640.51px;top:1431.50px;transform:scaleX(0.9933);">Unknown</span>
<span class="t" style="left:850.75px;top:1431.50px;">0</span>
<span class="t" style="left:1085.00px;top:271.00px;transform:scaleX(0.9375);">JumpTo</span>
<span class="t" style="left:1085.00px;top:853.60px;transform:scaleX(0.9375);">JumpTo</span>
<span class="t" style="left:1085.00px;top:1436.60px;transform:scaleX(0.9375);">JumpTo</span>
<span class="t" style="left:1182.04px;top:834.00px;transform:scaleX(0.9648);">FirstWordOfCode</span>
<span class="t" style="left:1392.64px;top:834.00px;transform:scaleX(0.9628);">Code</span>
<span class="t" style="left:1602.50px;top:834.00px;">1</span>
<span class="t" style="left:1814.51px;top:834.00px;transform:scaleX(0.9933);">Unknown</span>
<span class="t" style="left:2024.75px;top:834.00px;">0</span>
</body></html>
